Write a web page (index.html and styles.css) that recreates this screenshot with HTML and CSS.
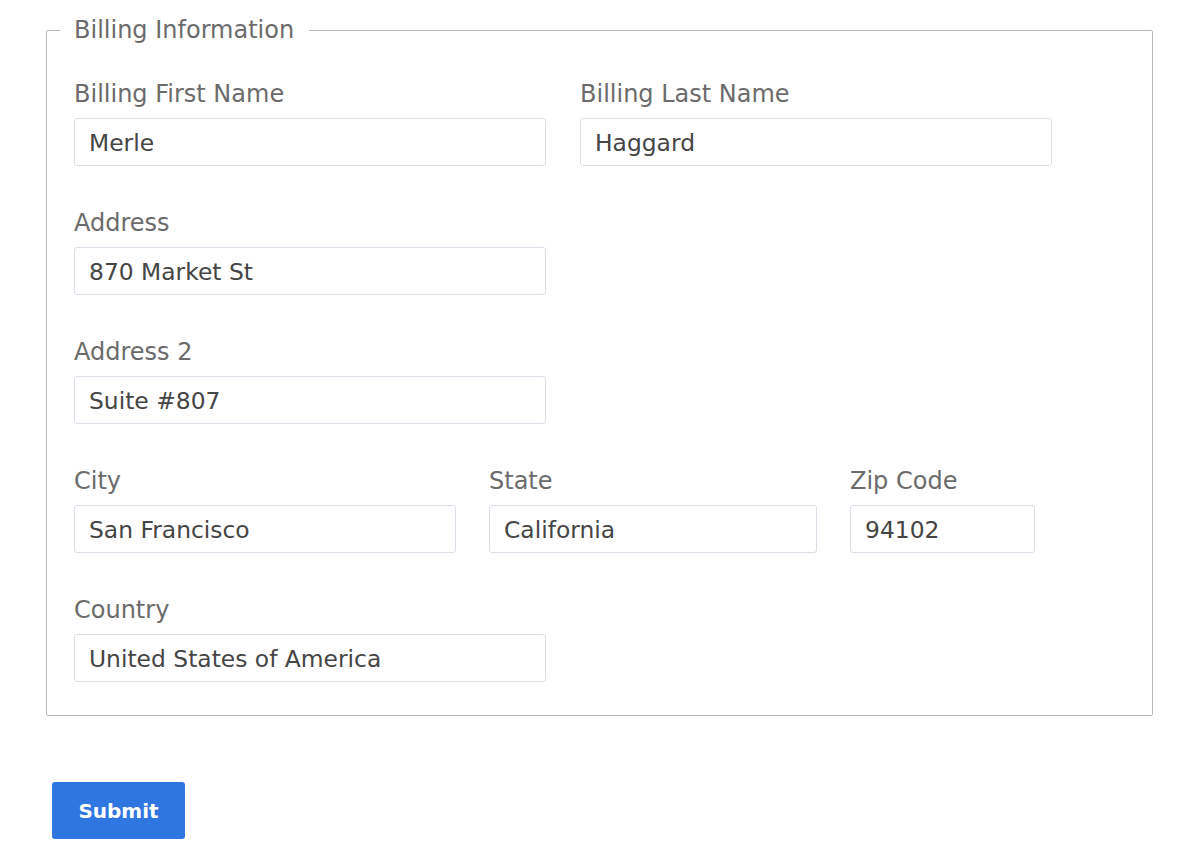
FILE: index.html
```html
<!DOCTYPE html>
<html>
<head>
    <title>Billing Information</title>
    <link rel="stylesheet" href="styles.css">
</head>
<body>
    <form class="billing-form">
        <fieldset class="billing">
            <legend>Billing Information</legend>
            <div class="fields">
                <div class="row">
                    <div class="field half">
                        <label for="first-name">Billing First Name</label>
                        <input type="text" id="first-name" value="Merle">
                    </div>
                    <div class="field half">
                        <label for="last-name">Billing Last Name</label>
                        <input type="text" id="last-name" value="Haggard">
                    </div>
                </div>
                <div class="row">
                    <div class="field half">
                        <label for="address">Address</label>
                        <input type="text" id="address" value="870 Market St">
                    </div>
                </div>
                <div class="row">
                    <div class="field half">
                        <label for="address2">Address 2</label>
                        <input type="text" id="address2" value="Suite #807">
                    </div>
                </div>
                <div class="row triple">
                    <div class="field city">
                        <label for="city">City</label>
                        <input type="text" id="city" value="San Francisco">
                    </div>
                    <div class="field state">
                        <label for="state">State</label>
                        <input type="text" id="state" value="California">
                    </div>
                    <div class="field zip">
                        <label for="zip">Zip Code</label>
                        <input type="text" id="zip" value="94102">
                    </div>
                </div>
                <div class="row">
                    <div class="field half">
                        <label for="country">Country</label>
                        <input type="text" id="country" value="United States of America">
                    </div>
                </div>
            </div>
        </fieldset>
        <button type="submit" class="submit">Submit</button>
    </form>
</body>
</html>
```

FILE: styles.css
```css
body {
    margin: 0;
    font-family: "DejaVu Sans", Verdana, sans-serif;
    background-color: #fff;
}

.billing-form {
    padding-top: 15px;
}

.billing {
    margin: 0 47px 0 46px;
    padding: 33px 0 33px 13px;
    border: 1px solid #b8b8b8;
    border-radius: 2px;
}

.billing legend {
    padding: 0 15px 0 14px;
    font-size: 24px;
    line-height: 30px;
    color: #6b6b6b;
}

.fields {
    padding-left: 14px;
}

.row {
    display: flex;
    gap: 34px;
    margin-bottom: 41px;
}

.row.triple {
    gap: 33px;
}

.row:last-child {
    margin-bottom: 0;
}

.field {
    display: flex;
    flex-direction: column;
}

.half {
    width: 472px;
}

.city {
    width: 382px;
}

.state {
    width: 328px;
}

.zip {
    width: 185px;
}

label {
    font-size: 24px;
    line-height: 30px;
    padding-top: 1px;
    margin-bottom: 9px;
    color: #6b6b6b;
}

input {
    box-sizing: border-box;
    height: 48px;
    padding: 1px 14px 0;
    border: 1px solid #dadee6;
    border-radius: 3px;
    font-family: "DejaVu Sans", Verdana, sans-serif;
    font-size: 23.4px;
    color: #454545;
}

.submit {
    margin: 66px 0 0 52px;
    width: 133px;
    height: 57px;
    border: none;
    border-radius: 3px;
    background-color: #2f76e0;
    color: #fff;
    font-family: "DejaVu Sans", Verdana, sans-serif;
    font-size: 20px;
    font-weight: bold;
}
```
